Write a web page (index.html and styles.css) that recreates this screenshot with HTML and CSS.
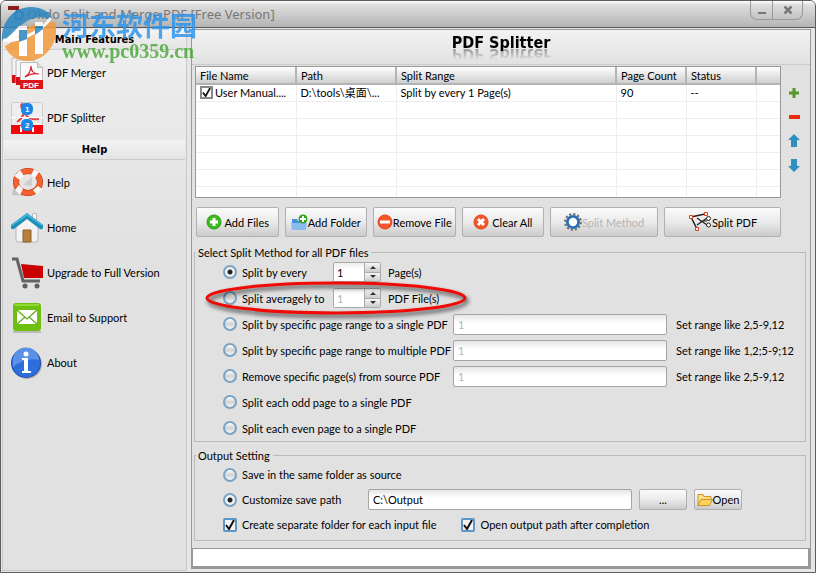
FILE: index.html
```
<!DOCTYPE html>
<html lang="en">
<head>
<meta charset="UTF-8">
<meta name="viewport" content="width=device-width, initial-scale=1">
<title>Okdo Split and Merge PDF [Free Version]</title>
<link rel="stylesheet" href="styles.css">
</head>
<body>
<div class="window">
  <header class="titlebar">
    <svg class="app-icon" width="17" height="16" viewBox="0 0 17 16" aria-hidden="true">
      <rect width="11" height="4" fill="#8c1d1d"/>
      <circle cx="11" cy="9" r="4" fill="none" stroke="#2f6fae" stroke-width="3" stroke-dasharray="2 1"/>
    </svg>
    <h1>Okdo Split and Merge PDF [Free Version]</h1>
    <div class="window-buttons">
      <button type="button" aria-label="Minimize"><svg width="10" height="10" viewBox="0 0 10 10"><path d="M1 8h8" stroke="#777" stroke-width="2"/></svg></button>
      <button type="button" aria-label="Close"><svg width="10" height="10" viewBox="0 0 10 10"><path d="M1.500 1.500l7 7M8.500 1.500l-7 7" stroke="#777" stroke-width="2.500"/></svg></button>
    </div>
  </header>

  <div class="body">
    <nav class="sidebar">
      <h2>Main Features</h2>
      <a href="#merger">
        <svg width="32" height="32" viewBox="0 0 32 32" aria-hidden="true">
          <path d="M1 1h18v24H1z" fill="#f4f4f4" stroke="#bbb"/><path d="M1 18h18v8H1z" fill="#d5121c"/>
          <path d="M5 3h18v24H5z" fill="#f4f4f4" stroke="#bbb"/><path d="M5 20h18v8H5z" fill="#d5121c"/>
          <path d="M9.500 5.500h17l5 5V31h-22z" fill="#fafafa" stroke="#bbb"/>
          <path d="M26.500 5.500v5h5" fill="#ddd" stroke="#bbb"/>
          <path d="M14 20c3-2 6-6 6-11 0 6 3 8 8 8-5-1-9 0-14 3z" fill="none" stroke="#d8232a" stroke-width="1.200"/>
          <path d="M9 23h23v9H9z" fill="#dc151c"/>
          <text x="12" y="31" class="icon-text">PDF</text>
        </svg>
        PDF Merger
      </a>
      <a href="#splitter">
        <svg width="32" height="32" viewBox="0 0 32 32" aria-hidden="true">
          <rect x="0.500" y="0.500" width="31" height="31" rx="1" fill="#eee" stroke="#ccc"/>
          <path d="M6 20c5-3 8-9 7-17-4-3-4 2 1 9 4 5 9 6 14 5" fill="none" stroke="#e0444a" stroke-width="2"/>
          <path d="M0 15.500h32" stroke="#fff"/>
          <path d="M0 23h32v9H0z" fill="#f0090c"/>
          <path d="M10 30v-5h4M22 25v5" stroke="#fff" stroke-width="2" fill="none"/>
          <rect x="10" y="1" width="12" height="12" rx="5" fill="#1c85ea"/>
          <rect x="10" y="17" width="12" height="12" rx="5" fill="#1c85ea"/>
          <text x="14" y="10" class="icon-text">1</text>
          <text x="14" y="26" class="icon-text">2</text>
        </svg>
        PDF Splitter
      </a>
      <h2>Help</h2>
      <a href="#help">
        <svg width="32" height="32" viewBox="0 0 32 32" aria-hidden="true">
          <path d="M3 17l-2 11 14 1z" fill="#c4c4c4"/>
          <ellipse cx="17" cy="15" rx="12" ry="11" fill="none" stroke="#b93010" stroke-width="6"/>
          <ellipse cx="17" cy="15" rx="12" ry="11" fill="none" stroke="#f3622f" stroke-width="5"/>
          <path d="M9 3l4 6-4 4-6-4zM23 2l5 3-4 6-4-3zM27 19l4 3-5 6-4-5zM8 18l4 4-3 6-5-5z" fill="#f6f6f6"/>
          <path d="M12 18l9-8v9z" fill="#cfcfcf"/>
        </svg>
        Help
      </a>
      <a href="#home">
        <svg width="32" height="32" viewBox="0 0 32 32" aria-hidden="true">
          <path d="M21.500 1.500h4V12h-4z" fill="#f5f5f5" stroke="#bbb"/>
          <path d="M5 15L16 6l11 9v13q0 2-2 2H7q-2 0-2-2z" fill="#f3f3f3" stroke="#b5b5b5"/>
          <path d="M12 18h8v12h-8z" fill="#b8803f" stroke="#916026"/>
          <path d="M0 13L16 1l16 12v3q-1 2-3 1L16 7 3 17q-2 1-3-1z" fill="#1e8fb8"/>
          <path d="M0 13L16 1l16 12-1 1L16 4 1 14z" fill="#45b1d5"/>
        </svg>
        Home
      </a>
      <a href="#upgrade">
        <svg width="32" height="32" viewBox="0 0 32 32" aria-hidden="true">
          <path d="M1 2h5l6 22h17" fill="none" stroke="#636363" stroke-width="3"/>
          <path d="M10 7l22 2v12H13z" fill="#c80203"/>
          <circle cx="14" cy="29" r="2.500" fill="#5e5e5e"/><circle cx="26" cy="29" r="2.500" fill="#5e5e5e"/>
        </svg>
        Upgrade to Full Version
      </a>
      <a href="#email">
        <svg width="32" height="32" viewBox="0 0 32 32" aria-hidden="true">
          <path d="M2 30h28" stroke="#bbb" stroke-width="2"/>
          <rect x="2" y="1" width="28" height="28" rx="3" fill="#6fbf10"/>
          <path d="M4 3h24" stroke="#8fdc30" stroke-width="2"/>
          <rect x="6" y="8" width="20" height="14" fill="#fff"/>
          <path d="M6 8l10 9 10-9M6 22l8-7M26 22l-8-7" fill="none" stroke="#63a818" stroke-width="1.200"/>
        </svg>
        Email to Support
      </a>
      <a href="#about">
        <svg width="32" height="32" viewBox="0 0 32 32" aria-hidden="true">
          <circle cx="16" cy="17" r="15" fill="#aaa"/>
          <circle cx="15" cy="16" r="15" fill="#1c4fb5"/>
          <circle cx="15" cy="16" r="14" fill="#2d6edc"/>
          <path d="M2 14a13 13 0 0 1 26-1q-14-3-26 7z" fill="#5b92e8"/>
          <circle cx="15" cy="7" r="2.500" fill="#fff"/>
          <path d="M11 11h6v13h3v2h-9v-2h2V13h-2z" fill="#fff"/>
        </svg>
        About
      </a>
    </nav>

    <main class="panel">
      <div class="panel-title"><h2>PDF Splitter</h2></div>

      <div class="files">
        <div class="file-list">
          <table>
            <thead>
              <tr><th class="c-name">File Name</th><th class="c-path">Path</th><th>Split Range</th><th class="c-count">Page Count</th><th class="c-status">Status</th><th class="c-last"></th></tr>
            </thead>
            <tbody>
              <tr><td><label class="file-name"><input type="checkbox" checked>User Manual....</label></td><td>D:\tools\桌面\...</td><td>Split by every 1 Page(s)</td><td>90</td><td>--</td><td></td></tr>
              <tr><td></td><td></td><td></td><td></td><td></td><td></td></tr>
              <tr><td></td><td></td><td></td><td></td><td></td><td></td></tr>
              <tr><td></td><td></td><td></td><td></td><td></td><td></td></tr>
              <tr><td></td><td></td><td></td><td></td><td></td><td></td></tr>
              <tr><td></td><td></td><td></td><td></td><td></td><td></td></tr>
              <tr class="cut"><td></td><td></td><td></td><td></td><td></td><td></td></tr>
            </tbody>
          </table>
        </div>
        <div class="order">
          <button type="button" aria-label="Add"><svg width="12" height="12" viewBox="0 0 12 12"><path d="M6 1v10M1 6h10" stroke="#57962a" stroke-width="3"/></svg></button>
          <button type="button" aria-label="Remove"><svg width="12" height="12" viewBox="0 0 12 12"><path d="M1 6h11" stroke="#ef2a0b" stroke-width="4"/></svg></button>
          <button type="button" aria-label="Move up"><svg width="12" height="14" viewBox="0 0 12 14"><path d="M6 0l6 6H9v7H3V6H0z" fill="#2f8fc0"/></svg></button>
          <button type="button" aria-label="Move down"><svg width="12" height="14" viewBox="0 0 12 14"><path d="M6 14L0 8h3V1h6v7h3z" fill="#2f8fc0"/></svg></button>
        </div>
      </div>

      <div class="toolbar">
        <button type="button" class="btn">
          <svg width="16" height="16" viewBox="0 0 16 16"><circle cx="8" cy="8" r="7" fill="#3dbb1e" stroke="#2b9a12"/><path d="M8 4v8M4 8h8" stroke="#fff" stroke-width="3"/></svg>
          Add Files
        </button>
        <button type="button" class="btn tight">
          <svg width="17" height="17" viewBox="0 0 17 17"><path d="M1 5h5l1 2h8v9H1z" fill="#4b8fda"/><path d="M0 9h16l-1 7H1z" fill="#8abaf0"/><circle cx="12" cy="5" r="4.500" fill="#2fa51a"/><path d="M12 2v6M9 5h6" stroke="#fff" stroke-width="2"/></svg>
          Add Folder
        </button>
        <button type="button" class="btn tight">
          <svg width="16" height="16" viewBox="0 0 16 16"><circle cx="8" cy="8" r="7" fill="#f4552b" stroke="#e0431b"/><path d="M3 8h10" stroke="#fff" stroke-width="3"/></svg>
          Remove File
        </button>
        <button type="button" class="btn">
          <svg width="16" height="16" viewBox="0 0 16 16"><circle cx="8" cy="8" r="7" fill="#f4552b" stroke="#e0431b"/><path d="M5 5l6 6M11 5l-6 6" stroke="#fff" stroke-width="3"/></svg>
          Clear All
        </button>
        <button type="button" class="btn wide tight" disabled>
          <svg width="18" height="18" viewBox="0 0 16 16"><circle cx="8" cy="8" r="7" fill="none" stroke="#777" stroke-width="2" stroke-dasharray="2 1.660"/><circle cx="8" cy="8" r="5" fill="#fff" stroke="#2c6fb3" stroke-width="2.500"/></svg>
          Split Method
        </button>
        <button type="button" class="btn wider tight">
          <svg width="24" height="20" viewBox="0 0 24 20"><path d="M3 5l14-3M3 5l6 12" stroke="#222" stroke-width="1.500" fill="none"/><path d="M9 13l10-7M9 6l10 7M12 9h7" stroke="#222" stroke-width="1.200" fill="none"/><circle cx="20.500" cy="6.500" r="2" fill="#fff" stroke="#222"/><circle cx="20.500" cy="13" r="2" fill="#fff" stroke="#222"/><path d="M1.500 3.500h3v3h-3zM16.500 0.500h3v3h-3zM7.500 15.500h3v3h-3z" fill="#fff" stroke="#e4401c"/></svg>
          Split PDF
        </button>
      </div>

      <fieldset class="group">
        <legend>Select Split Method for all PDF files</legend>
        <div class="row">
          <label class="short"><input type="radio" name="method" checked>Split by every</label>
          <span class="spinner"><input type="text" value="1" aria-label="Pages per file"><span class="steps"><button type="button" aria-label="Increase pages"></button><button type="button" class="down" aria-label="Decrease pages"></button></span></span>
          Page(s)
        </div>
        <div class="row marked">
          <label class="short"><input type="radio" name="method">Split averagely to</label>
          <span class="spinner"><input type="text" value="1" aria-label="Number of files" disabled><span class="steps"><button type="button" aria-label="Increase files"></button><button type="button" class="down" aria-label="Decrease files"></button></span></span>
          PDF File(s)
          <svg class="marker" width="270" height="46" viewBox="0 0 270 46" aria-hidden="true"><ellipse cx="133" cy="21" rx="129" ry="15" fill="none" stroke="#f00a05" stroke-width="3"/></svg>
        </div>
        <div class="row">
          <label class="long"><input type="radio" name="method">Split by specific page range to a single PDF</label>
          <input class="field" type="text" value="1" aria-label="Range for a single PDF" disabled>
          <span class="hint">Set range like 2,5-9,12</span>
        </div>
        <div class="row">
          <label class="long"><input type="radio" name="method">Split by specific page range to multiple PDF</label>
          <input class="field" type="text" value="1" aria-label="Ranges for multiple PDF" disabled>
          <span class="hint">Set range like 1,2;5-9;12</span>
        </div>
        <div class="row">
          <label class="long"><input type="radio" name="method">Remove specific page(s) from source PDF</label>
          <input class="field" type="text" value="1" aria-label="Pages to remove" disabled>
          <span class="hint">Set range like 2,5-9,12</span>
        </div>
        <div class="row"><label><input type="radio" name="method">Split each odd page to a single PDF</label></div>
        <div class="row"><label><input type="radio" name="method">Split each even page to a single PDF</label></div>
      </fieldset>

      <fieldset class="group output">
        <legend>Output Setting</legend>
        <div class="row"><label><input type="radio" name="save">Save in the same folder as source</label></div>
        <div class="row path">
          <label class="medium"><input type="radio" name="save" checked>Customize save path</label>
          <input class="field" type="text" value="C:\Output" aria-label="Save path">
          <button type="button" class="btn small">...</button>
          <button type="button" class="btn small tight">
            <svg width="16" height="14" viewBox="0 0 16 14"><path d="M1 12.500v-11h5l1 2h7v3" fill="#fbe08a" stroke="#d0902c"/><path d="M1 12.500l3-6h11.500l-3 6z" fill="#fdd35c" stroke="#d0902c"/></svg>
            Open
          </button>
        </div>
        <div class="row checks">
          <label><input type="checkbox" checked>Create separate folder for each input file</label>
          <label><input type="checkbox" checked>Open output path after completion</label>
        </div>
      </fieldset>

      <div class="log"></div>
    </main>
  </div>

  <div class="watermark">
    <svg width="56" height="58" viewBox="0 0 56 58" aria-hidden="true">
      <path d="M1 35C0 15 13 1 30 1c11 0 19 5 22 13-12-5-22-3-30 4-9 7-14 13-21 17z" fill="#2b87c0"/>
      <path d="M4 40c6-3 11-8 17-14 9-8 20-12 33-10 5 19-8 38-26 39C16 55 7 49 4 40z" fill="#f39a3c"/>
      <path d="M7 32l11-12h8v30h-8V30q-4 5-11 7zM34 16h8v32h-8z" fill="#fff"/>
      <path d="M2 34C14 36 36 30 50 12" stroke="#fff" stroke-width="3" fill="none"/>
      <path d="M18 24h8v9l-8 3zM34 20h8v3l-8 6z" fill="#2b87c0"/>
    </svg>
    <div>
      <p class="site">河东软件园</p>
      <p class="url">www.pc0359.cn</p>
    </div>
  </div>
</div>
</body>
</html>
```
FILE: styles.css
```
* {
  box-sizing: border-box;
}
body {
  margin: 0;
  font: 11px/13px Lato, "Noto Sans CJK SC", sans-serif;
  color: #000;
  background: #fff;
}
h1, h2, p {
  margin: 0;
}
button, input {
  font: inherit;
  color: inherit;
}
.window {
  position: relative;
  display: flex;
  flex-direction: column;
  min-height: 100vh;
  border: 1px solid #5c5c5c;
  border-radius: 6px 6px 0 0;
  background: #e6e6e6;
  overflow: hidden;
}

/* Title bar */
.titlebar {
  display: flex;
  align-items: center;
  height: 27px;
  padding: 0 12px 0 7px;
  gap: 2px;
  border-bottom: 1px solid #555;
  background: linear-gradient(#fff, #dedede 15%, #b4b4b4);
}
.titlebar h1 {
  flex: 1;
  font: 13px/16px "Noto Sans", sans-serif;
  color: #777;
}
.window-buttons {
  align-self: flex-start;
  display: flex;
  border: 1px solid #999;
  border-top: 0;
  border-radius: 0 0 7px 7px;
}
.window-buttons button {
  width: 21px;
  height: 18px;
  padding: 0;
  border: 0;
  background: none;
}
.window-buttons button + button {
  width: 30px;
  border-left: 1px solid #999;
}

.body {
  flex: 1;
  display: grid;
  grid-template-columns: 185px 1fr;
  gap: 4px;
  padding: 1px 4px 1px 1px;
}

/* Sidebar */
.sidebar {
  padding: 1px 1px 0;
  border: 1px solid #c8c8c8;
  border-top: 0;
  background: linear-gradient(#efefef, #e1e1e1 220px);
}
.sidebar h2 {
  height: 20px;
  border-bottom: 1px solid #ccc;
  background: linear-gradient(#f3f3f3, #e4e4e4);
  font: bold 11px/20px "DejaVu Sans Condensed", sans-serif;
  text-align: center;
}
.sidebar a {
  display: flex;
  align-items: center;
  gap: 4px;
  height: 45px;
  padding-left: 7px;
  color: #000;
  text-decoration: none;
}
.icon-text {
  font: bold 8px "Liberation Sans", sans-serif;
  fill: #fff;
}

/* Main panel */
.panel {
  display: flex;
  flex-direction: column;
  margin-bottom: 2px;
  border: 1px solid #999;
  background: #e1e1e1;
}
.panel-title {
  height: 35px;
  padding-top: 3px;
  border-bottom: 1px solid #ccc;
  background: linear-gradient(#f2f2f2, #e2e2e2);
  text-align: center;
}
.panel-title h2 {
  display: inline-block;
  font: bold 16px/20px "DejaVu Sans Condensed", sans-serif;
  -webkit-box-reflect: below -9px linear-gradient(transparent 20%, rgba(0, 0, 0, 0.5));
}
.files {
  display: flex;
  margin: 1px 0 0 3px;
}
.file-list {
  flex: 1;
  height: 132px;
  border: 1px solid #999;
  background: #fff;
  overflow: hidden;
}
table {
  width: 100%;
  table-layout: fixed;
  border-collapse: collapse;
}
th, td {
  height: 17px;
  padding: 0 4px;
  border-right: 1px solid #eee;
  border-bottom: 1px solid #eee;
  font-weight: normal;
  text-align: left;
  white-space: nowrap;
}
th {
  border-right: 2px solid #b4b4b4;
  border-bottom: 2px solid #b4b4b4;
  background: linear-gradient(#fff, #cfcfcf);
}
th:last-child, td:last-child {
  border-right: 0;
}
.cut td {
  border-bottom: 0;
}
.c-name, .c-path {
  width: 100px;
}
.c-count, .c-status {
  width: 70px;
}
.c-last {
  width: 24px;
}
.file-name {
  display: flex;
  align-items: center;
  gap: 2px;
}
.order {
  display: flex;
  flex-direction: column;
  align-items: center;
  gap: 4px;
  width: 29px;
  padding: 17px 3px 0 0;
}
.order button {
  display: flex;
  align-items: center;
  justify-content: center;
  width: 20px;
  height: 20px;
  padding: 0;
  border: 0;
  background: none;
}

/* Buttons */
.toolbar {
  display: flex;
  gap: 6px;
  margin: 9px 29px 0 4px;
}
.btn {
  flex: 82 1 0;
  display: flex;
  align-items: center;
  justify-content: center;
  gap: 3px;
  height: 30px;
  padding: 0;
  border: 1px solid #b0b0b0;
  border-radius: 2px;
  background: linear-gradient(#fbfbfb, #eaeaea 50%, #cbcbcb);
  white-space: nowrap;
}
.btn:disabled {
  color: #b4b4b4;
}
.tight {
  gap: 0;
}
.wide {
  flex-grow: 108;
}
.wider {
  flex-grow: 117;
}
.small {
  flex: none;
  width: 48px;
  height: 21px;
}

/* Option groups */
.group {
  min-width: 0;
  margin: 9px 4px 0 2px;
  padding: 0 9px 0 28px;
  border: 1px solid #bbb;
}
.group legend {
  margin-left: -27px;
  padding: 0 3px 0 2px;
}
.row {
  display: flex;
  align-items: center;
  height: 26px;
}
.row label {
  display: flex;
  align-items: center;
  gap: 5px;
}
.row .short {
  width: 110px;
}
.row .medium {
  width: 145px;
}
.row .long {
  width: 230px;
}
input[type="radio"] {
  appearance: none;
  width: 14px;
  height: 14px;
  margin: 0;
  border: 2px solid #79a3c5;
  border-radius: 50%;
  background: linear-gradient(#fff, #d2d2d2 50%, #f8f8f8);
}
input[type="radio"]:checked {
  background: radial-gradient(#222 2px, #f2f2f2 3px);
}
input[type="checkbox"] {
  appearance: none;
  width: 14px;
  height: 14px;
  margin: 0;
  border: 2px solid #5c96c8;
  border-radius: 2px;
  background: #f2f2f2 url("data:image/svg+xml,%3Csvg xmlns='http://www.w3.org/2000/svg' viewBox='0 0 10 10'%3E%3Cpath d='M1 5l3 4 5-9' fill='none' stroke='%23111' stroke-width='2'/%3E%3C/svg%3E");
}
.file-name input[type="checkbox"] {
  width: 13px;
  height: 13px;
  border-color: #888;
  border-radius: 0;
  background-color: #fff;
}
.spinner {
  display: flex;
  width: 48px;
  height: 20px;
  margin-right: 7px;
  border: 1px solid #aaa;
  border-radius: 2px;
  background: #fff;
}
.spinner input {
  flex: 1;
  width: 0;
  padding: 0 3px;
  border: 0;
  background: linear-gradient(#ececec, #fff 6px);
}
input:disabled {
  color: #b4b4b4;
}
.steps {
  display: flex;
  flex-direction: column;
  width: 16px;
  border-left: 1px solid #aaa;
}
.steps button {
  flex: 1;
  display: flex;
  align-items: center;
  justify-content: center;
  padding: 0;
  border: 0;
  background: linear-gradient(#f6f6f6, #ccc);
}
.steps .down {
  border-top: 1px solid #aaa;
}
.steps button::before {
  content: "";
  border: 3px solid transparent;
  border-top: 0;
  border-bottom-color: #333;
}
.steps .down::before {
  border-top: 3px solid #333;
  border-bottom: 0;
}
.marked {
  position: relative;
}
.marker {
  position: absolute;
  left: -20px;
  top: -8px;
  filter: drop-shadow(2px 3px 2px rgba(0, 0, 0, 0.7));
  pointer-events: none;
}
.field {
  flex: 1;
  min-width: 0;
  height: 21px;
  padding: 0 4px;
  border: 1px solid #a4a4a4;
  border-radius: 2px;
  background: linear-gradient(#e6e6e6, #fff 8px);
}
.hint {
  width: 129px;
  padding-left: 9px;
}
.output {
  margin-top: 7px;
  padding-bottom: 3px;
}
.output .row {
  height: 25px;
}
.output .path {
  padding-right: 54px;
}
.path .small {
  margin-left: 7px;
}
.output .checks {
  gap: 25px;
}
.log {
  flex: 1;
  min-height: 20px;
  margin-top: 7px;
  border: 2px solid #999;
  border-width: 1px 2px 2px 1px;
  background: #fff;
}

/* Site watermark over the top left corner */
.watermark {
  position: absolute;
  left: 0;
  top: 5px;
  display: flex;
  gap: 5px;
  opacity: 0.85;
  pointer-events: none;
}
.site {
  padding-top: 5px;
  font: bold 27px/28px "Noto Sans CJK SC", sans-serif;
  color: #3095ea;
}
.url {
  font: bold 20px/24px "Liberation Serif", serif;
  color: #4fa83d;
}
```
